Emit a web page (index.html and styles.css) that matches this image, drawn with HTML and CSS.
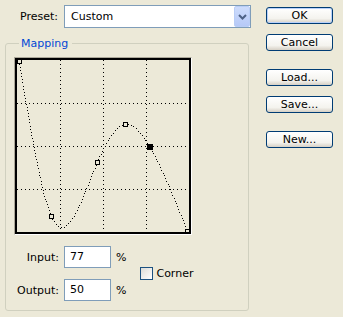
FILE: index.html
```html
<!DOCTYPE html>
<html>
<head>
    <title>Curves</title>
    <link rel="stylesheet" href="styles.css">
</head>
<body>

<div class="dialog">
    <div class="main">
        <div class="preset">
            <span class="presetLabel">Preset:</span>
            <div class="select">
                <span class="selectValue">Custom</span>
                <span class="selectArrow">
                    <svg width="9" height="6" viewBox="0 0 9 6"><path d="M1 1 L4.5 4.5 L8 1" fill="none" stroke="#4d6185" stroke-width="2"/></svg>
                </span>
            </div>
        </div>

        <fieldset class="mapping">
            <legend>Mapping</legend>
            <div class="graph">
                <div class="graphIn">
                    <svg id="curve" width="172" height="172" shape-rendering="crispEdges">
                        <g stroke="#000" stroke-width="1" stroke-dasharray="1 3">
                            <line x1="43.5" y1="0" x2="43.5" y2="172"/>
                            <line x1="86.5" y1="0" x2="86.5" y2="172"/>
                            <line x1="129.5" y1="0" x2="129.5" y2="172"/>
                            <line x1="0" y1="43.5" x2="172" y2="43.5"/>
                            <line x1="0" y1="86.5" x2="172" y2="86.5"/>
                            <line x1="0" y1="129.5" x2="172" y2="129.5"/>
                        </g>
                        <g id="dots" fill="#000"></g>
                        <g id="points" fill="none" stroke="#000" stroke-width="1"></g>
                    </svg>
                </div>
            </div>

            <div class="values">
                <div class="fields">
                    <span class="fieldLabel">Input:</span>
                    <div class="field">77</div>
                    <span class="pct">%</span>
                    <span class="fieldLabel">Output:</span>
                    <div class="field">50</div>
                    <span class="pct">%</span>
                </div>
                <div class="corner"><span class="check"></span>Corner</div>
            </div>
        </fieldset>
    </div>

    <div class="buttons">
        <div class="btn default">OK</div>
        <div class="btn">Cancel</div>
        <div class="btn gapTop">Load...</div>
        <div class="btn">Save...</div>
        <div class="btn gapTop">New...</div>
    </div>
</div>

<script>
// control points in graph pixels (x right, y down)
var xs = [2, 34, 80, 108, 132, 170];
var ys = [1, 156, 102, 64, 86, 171];
var selected = 4;

// natural cubic spline second derivatives
function spline(x, y){
    var n = x.length, h = [], a = [], b = [], c = [], d = [], m = [];
    for (var i = 0; i < n - 1; i++) h[i] = x[i+1] - x[i];
    for (var i = 1; i < n - 1; i++){
        a[i] = h[i-1];
        b[i] = 2 * (h[i-1] + h[i]);
        c[i] = h[i];
        d[i] = 6 * ((y[i+1] - y[i]) / h[i] - (y[i] - y[i-1]) / h[i-1]);
    }
    for (var i = 2; i < n - 1; i++){
        var w = a[i] / b[i-1];
        b[i] -= w * c[i-1];
        d[i] -= w * d[i-1];
    }
    m[0] = 0; m[n-1] = 0;
    for (var i = n - 2; i >= 1; i--){
        m[i] = (d[i] - (i < n - 2 ? c[i] * m[i+1] : 0)) / b[i];
    }
    return m;
}

function evalAt(t, m){
    var k = 0;
    while (k < xs.length - 2 && t > xs[k+1]) k++;
    var h = xs[k+1] - xs[k];
    var A = (xs[k+1] - t) / h, B = (t - xs[k]) / h;
    return A * ys[k] + B * ys[k+1] + ((A*A*A - A) * m[k] + (B*B*B - B) * m[k+1]) * h * h / 6;
}

(function(){
    var ns = "http://www.w3.org/2000/svg";
    var m = spline(xs, ys);
    var dots = document.getElementById('dots');
    var px = xs[0], py = ys[0], run = 3;
    for (var t = xs[0]; t <= xs[xs.length-1]; t += 0.05){
        var v = Math.max(0, Math.min(171, evalAt(t, m)));
        run += Math.sqrt((t - px) * (t - px) + (v - py) * (v - py));
        px = t; py = v;
        if (run >= 3){
            run = 0;
            var r = document.createElementNS(ns, 'rect');
            r.setAttribute('x', Math.round(t));
            r.setAttribute('y', Math.round(v));
            r.setAttribute('width', 1);
            r.setAttribute('height', 1);
            dots.appendChild(r);
        }
    }
    var pts = document.getElementById('points');
    for (var i = 0; i < xs.length; i++){
        var s = document.createElementNS(ns, 'rect');
        if (i == selected){
            s.setAttribute('x', xs[i] - 2);
            s.setAttribute('y', ys[i] - 2);
            s.setAttribute('width', 5);
            s.setAttribute('height', 5);
            s.setAttribute('fill', '#000');
        } else {
            s.setAttribute('x', xs[i] - 1.5);
            s.setAttribute('y', ys[i] - 1.5);
            s.setAttribute('width', 4);
            s.setAttribute('height', 4);
            s.setAttribute('fill', '#ece9d8');
        }
        pts.appendChild(s);
    }
})()
</script>

</body>
</html>
```

FILE: styles.css
```css
html, body{
    margin: 0;
    background: #ece9d8;
}
body{
    font-family: "DejaVu Sans", sans-serif;
    font-size: 11px;
    color: #000;
}
.dialog{
    display: flex;
    padding: 5px 0 0 5px;
}
.main{
    width: 246px;
}

/* preset row */
.preset{
    display: flex;
    align-items: center;
    padding-left: 15px;
    height: 23px;
}
.presetLabel{
    width: 44px;
}
.select{
    display: flex;
    align-items: center;
    box-sizing: border-box;
    width: 187px;
    height: 23px;
    border: 1px solid #7f9db9;
    background: #fff;
}
.selectValue{
    flex: 1;
    padding-left: 6px;
}
.selectArrow{
    display: flex;
    align-items: center;
    justify-content: center;
    box-sizing: border-box;
    width: 16px;
    height: 21px;
    border: 1px solid #b9cdf6;
    border-radius: 2px;
    background: linear-gradient(#cddcfc, #b6c9f7);
}

/* mapping group */
.mapping{
    margin: 9px 2px 0 0;
    padding: 7px 0 9px 8px;
    border: 1px solid #d0d0bf;
    border-radius: 3px;
}
.mapping legend{
    margin-left: 5px;
    padding: 0 4px 0 2px;
    line-height: 13px;
    color: #0046d5;
}
.graph{
    width: 176px;
    height: 176px;
    border: 1px solid;
    border-color: #aca899 #fff #fff #aca899;
}
.graphIn{
    width: 172px;
    height: 172px;
    border: 2px solid #000;
}
.graphIn svg{
    display: block;
    overflow: hidden;
}

.values{
    display: flex;
    align-items: center;
    margin-top: 11px;
}
.fields{
    display: grid;
    grid-template-columns: 45px 47px auto;
    column-gap: 5px;
    row-gap: 11px;
    align-items: center;
}
.fieldLabel{
    text-align: right;
}
.field{
    box-sizing: border-box;
    height: 22px;
    line-height: 20px;
    padding-left: 5px;
    border: 1px solid #7f9db9;
    background: #fff;
}
.corner{
    display: flex;
    align-items: center;
    margin-left: 14px;
}
.check{
    box-sizing: border-box;
    width: 13px;
    height: 13px;
    margin-right: 3px;
    border: 1px solid #1c5180;
    background: linear-gradient(135deg, #dcdcd7, #fff);
}

/* button column */
.buttons{
    display: flex;
    flex-direction: column;
    margin: 2px 0 0 15px;
}
.btn{
    box-sizing: border-box;
    width: 67px;
    height: 17px;
    margin-bottom: 10px;
    line-height: 15px;
    text-align: center;
    border: 1px solid #003c74;
    border-radius: 3px;
    background: linear-gradient(#fff, #f4f3ee 70%, #d6d0c5);
}
.btn.default{
    box-shadow: inset 0 0 0 1px #b9d1fa;
}
.btn.gapTop{
    margin-top: 8px;
}
```
